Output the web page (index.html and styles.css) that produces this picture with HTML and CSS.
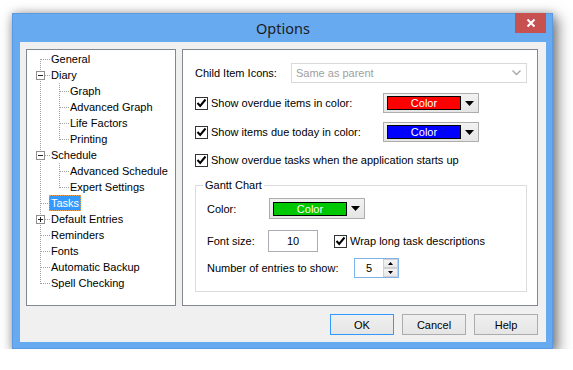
FILE: index.html
```html
<!DOCTYPE html>
<html lang="en">
<head>
    <meta charset="UTF-8">
    <title>Options</title>
    <link rel="stylesheet" href="styles.css">
</head>
<body>
    <div class="window">
        <div class="titlebar">
            <div class="title">Options</div>
            <div class="close">
                <svg width="10" height="10" viewBox="0 0 10 10"><path d="M1.5 1.5 L8.5 8.5 M8.5 1.5 L1.5 8.5" stroke="#fff" stroke-width="2"/></svg>
            </div>
        </div>
        <div class="client">
            <div class="panes">
                <div class="tree">
                    <div class="node"><span class="g1 first"></span><span class="label">General</span></div>
                    <div class="node"><span class="g1"><span class="box minus"></span></span><span class="label">Diary</span></div>
                    <div class="node"><span class="g2"></span><span class="label">Graph</span></div>
                    <div class="node"><span class="g2"></span><span class="label">Advanced Graph</span></div>
                    <div class="node"><span class="g2"></span><span class="label">Life Factors</span></div>
                    <div class="node"><span class="g2 last"></span><span class="label">Printing</span></div>
                    <div class="node"><span class="g1"><span class="box minus"></span></span><span class="label">Schedule</span></div>
                    <div class="node"><span class="g2"></span><span class="label">Advanced Schedule</span></div>
                    <div class="node"><span class="g2 last"></span><span class="label">Expert Settings</span></div>
                    <div class="node"><span class="g1"></span><span class="label selected">Tasks</span></div>
                    <div class="node"><span class="g1"><span class="box plus"></span></span><span class="label">Default Entries</span></div>
                    <div class="node"><span class="g1"></span><span class="label">Reminders</span></div>
                    <div class="node"><span class="g1"></span><span class="label">Fonts</span></div>
                    <div class="node"><span class="g1"></span><span class="label">Automatic Backup</span></div>
                    <div class="node"><span class="g1 last"></span><span class="label">Spell Checking</span></div>
                </div>

                <div class="page">
                    <div class="row combo-row">
                        <span class="combo-label">Child Item Icons:</span>
                        <div class="combo">
                            <span>Same as parent</span>
                            <svg width="9" height="6" viewBox="0 0 9 6"><path d="M0.5 0.5 L4.5 4.5 L8.5 0.5" fill="none" stroke="#a8a8a8" stroke-width="1.4"/></svg>
                        </div>
                    </div>

                    <div class="row color-row first-color">
                        <label class="check-wrap">
                            <span class="cb"><svg width="11" height="11" viewBox="0 0 11 11"><path d="M1.5 5 L4.2 8 L9.5 1.5" fill="none" stroke="#000" stroke-width="2"/></svg></span>
                            Show overdue items in color:
                        </label>
                        <div class="colorbtn">
                            <span class="swatch red">Color</span>
                            <svg class="drop" width="9" height="5" viewBox="0 0 9 5"><path d="M0 0 H9 L4.5 5 Z"/></svg>
                        </div>
                    </div>

                    <div class="row color-row second-color">
                        <label class="check-wrap">
                            <span class="cb"><svg width="11" height="11" viewBox="0 0 11 11"><path d="M1.5 5 L4.2 8 L9.5 1.5" fill="none" stroke="#000" stroke-width="2"/></svg></span>
                            Show items due today in color:
                        </label>
                        <div class="colorbtn">
                            <span class="swatch blue">Color</span>
                            <svg class="drop" width="9" height="5" viewBox="0 0 9 5"><path d="M0 0 H9 L4.5 5 Z"/></svg>
                        </div>
                    </div>

                    <div class="row startup-row">
                        <label class="check-wrap">
                            <span class="cb"><svg width="11" height="11" viewBox="0 0 11 11"><path d="M1.5 5 L4.2 8 L9.5 1.5" fill="none" stroke="#000" stroke-width="2"/></svg></span>
                            Show overdue tasks when the application starts up
                        </label>
                    </div>

                    <div class="group">
                        <span class="group-title">Gantt Chart</span>

                        <div class="row gantt-color">
                            <span class="field-label color-label">Color:</span>
                            <div class="colorbtn">
                                <span class="swatch green">Color</span>
                                <svg class="drop" width="9" height="5" viewBox="0 0 9 5"><path d="M0 0 H9 L4.5 5 Z"/></svg>
                            </div>
                        </div>

                        <div class="row font-row">
                            <span class="field-label size-label">Font size:</span>
                            <div class="textbox">10</div>
                            <label class="check-wrap wrap-check">
                                <span class="cb"><svg width="11" height="11" viewBox="0 0 11 11"><path d="M1.5 5 L4.2 8 L9.5 1.5" fill="none" stroke="#000" stroke-width="2"/></svg></span>
                                Wrap long task descriptions
                            </label>
                        </div>

                        <div class="row entries-row">
                            <span class="field-label entries-label">Number of entries to show:</span>
                            <div class="spin">
                                <span class="spin-val">5</span>
                                <div class="spin-btns">
                                    <span class="spin-btn"><svg width="5" height="3" viewBox="0 0 5 3"><path d="M0 3 H5 L2.5 0 Z"/></svg></span>
                                    <span class="spin-btn"><svg width="5" height="3" viewBox="0 0 5 3"><path d="M0 0 H5 L2.5 3 Z"/></svg></span>
                                </div>
                            </div>
                        </div>
                    </div>
                </div>
            </div>

            <div class="buttons">
                <button class="btn default">OK</button>
                <button class="btn">Cancel</button>
                <button class="btn">Help</button>
            </div>
        </div>
    </div>
</body>
</html>
```

FILE: styles.css
```css
:root {
    --v: repeating-linear-gradient(to bottom, #a0a0a0 0 1px, transparent 1px 2px);
    --h: repeating-linear-gradient(to right, #a0a0a0 0 1px, transparent 1px 2px);
}
body {
    margin: 0;
    background-color: #fff;
    font-family: "Liberation Sans", Arial, sans-serif;
    font-size: 11px;
    color: #000;
}
.window {
    width: 541px;
    height: 336px;
    box-sizing: border-box;
    margin: 13px 0 0 12px;
    border: 1px solid #5a9ae2;
    background-color: #68aaf0;
    padding: 0 6px 6px 7px;
    display: flex;
    flex-direction: column;
    box-shadow: 4px 5px 13px 1px rgba(0,0,0,0.5), 0 0 8px rgba(0,0,0,0.18);
}
.titlebar {
    height: 28px;
    display: grid;
    grid-template-columns: 1fr auto 1fr;
}
.title {
    grid-column: 2;
    font-family: "Noto Sans", "Open Sans", sans-serif;
    font-size: 14.5px;
    line-height: 28px;
    color: #1c1c1c;
}
.close {
    grid-column: 3;
    justify-self: end;
    width: 31px;
    height: 20px;
    margin-top: -1px;
    background-color: #c75050;
    display: flex;
    justify-content: center;
    align-items: center;
}
.client {
    flex: 1;
    background-color: #f0f0f0;
    padding: 7px 8px 0 6px;
    display: flex;
    flex-direction: column;
}
.panes {
    display: flex;
    gap: 6px;
    height: 257px;
}

/* tree */
.tree {
    width: 150px;
    box-sizing: border-box;
    border: 1px solid #828790;
    background-color: #fff;
    padding-top: 1px;
}
.node {
    display: flex;
    align-items: center;
    height: 16px;
}
.g1, .g2 {
    display: block;
    height: 16px;
    flex: none;
    background-repeat: no-repeat;
}
.g1 {
    width: 23px;
    background-image: var(--v), var(--h);
    background-position: 13px 0, 14px 8px;
    background-size: 1px 16px, 9px 1px;
}
.g1.first {
    background-position: 13px 8px, 14px 8px;
    background-size: 1px 8px, 9px 1px;
}
.g1.last {
    background-size: 1px 9px, 9px 1px;
}
.g2 {
    width: 42px;
    background-image: var(--v), var(--v), var(--h);
    background-position: 13px 0, 32px 0, 33px 8px;
    background-size: 1px 16px, 1px 16px, 9px 1px;
}
.g2.last {
    background-size: 1px 16px, 1px 9px, 9px 1px;
}
.box {
    display: block;
    width: 9px;
    height: 9px;
    box-sizing: border-box;
    margin: 4px 0 0 9px;
    border: 1px solid #8e8f8f;
    background-repeat: no-repeat;
    background-color: #fff;
}
.box.minus {
    background-image: linear-gradient(#222, #222);
    background-position: 1px 3px;
    background-size: 5px 1px;
}
.box.plus {
    background-image: linear-gradient(#222, #222), linear-gradient(#222, #222);
    background-position: 1px 3px, 3px 1px;
    background-size: 5px 1px, 1px 5px;
}
.label {
    padding: 0 1px;
    line-height: 14px;
    white-space: nowrap;
    border: 1px solid transparent;
    margin-left: -1px;
}
.label.selected {
    background-color: #3399ff;
    color: #fff;
    border: 1px dotted #e8a050;
}

/* page */
.page {
    flex: 1;
    border: 1px solid #828790;
    background-color: #fff;
    padding: 0 10px 0 12px;
    display: flex;
    flex-direction: column;
}
.row {
    display: flex;
    align-items: center;
    white-space: nowrap;
}
.combo-row {
    margin-top: 13px;
    height: 20px;
}
.combo-label {
    width: 96px;
}
.combo {
    width: 236px;
    height: 20px;
    box-sizing: border-box;
    border: 1px solid #d9d9d9;
    background-color: #fff;
    color: #a0a0a0;
    padding: 0 5px 0 4px;
    display: flex;
    align-items: center;
    justify-content: space-between;
}
.first-color {
    margin-top: 10px;
    height: 20px;
}
.second-color {
    margin-top: 9px;
    height: 20px;
}
.startup-row {
    margin-top: 8px;
    height: 20px;
}
.check-wrap {
    display: flex;
    align-items: center;
    gap: 3px;
}
.color-row .check-wrap {
    width: 188px;
}
.cb {
    width: 13px;
    height: 13px;
    box-sizing: border-box;
    border: 1px solid #333;
    background-color: #fff;
    display: flex;
    flex: none;
}
.colorbtn {
    width: 96px;
    height: 20px;
    box-sizing: border-box;
    border: 1px solid #adadad;
    background: linear-gradient(#f2f2f2, #e5e5e5);
    display: flex;
    align-items: center;
    padding-left: 3px;
}
.swatch {
    width: 74px;
    height: 14px;
    box-sizing: border-box;
    border: 1px solid #000;
    color: #fff;
    text-align: center;
    line-height: 12px;
}
.swatch.red { background-color: #ff0000; }
.swatch.blue { background-color: #0000ff; }
.swatch.green { background-color: #00c800; }
.drop {
    margin-left: 4px;
}

/* gantt group */
.group {
    margin-top: 15px;
    border: 1px solid #dcdcdc;
    padding: 0 0 13px 11px;
    display: flex;
    flex-direction: column;
}
.group-title {
    align-self: flex-start;
    margin: -7px 0 0 -4px;
    padding: 0 2px;
    line-height: 13px;
    background-color: #fff;
}
.gantt-color {
    margin-top: 6px;
    height: 21px;
}
.gantt-color .colorbtn {
    height: 21px;
}
.field-label {
    flex: none;
}
.color-label { width: 62px; }
.size-label { width: 61px; }
.entries-label { width: 147px; }
.font-row {
    margin-top: 11px;
    height: 22px;
}
.textbox {
    width: 50px;
    height: 22px;
    box-sizing: border-box;
    border: 1px solid #abadb3;
    text-align: center;
    line-height: 20px;
}
.wrap-check {
    margin-left: 16px;
}
.entries-row {
    margin-top: 6px;
    height: 20px;
}
.spin {
    width: 45px;
    height: 20px;
    box-sizing: border-box;
    border: 1px solid #7eb4ea;
    display: flex;
}
.spin-val {
    flex: 1;
    text-align: center;
    line-height: 18px;
}
.spin-btns {
    width: 15px;
    display: flex;
    flex-direction: column;
    gap: 0;
}
.spin-btn {
    flex: 1;
    box-sizing: border-box;
    border: 1px solid #d0d0d0;
    background: linear-gradient(#f4f4f4, #e8e8e8);
    display: flex;
    justify-content: center;
    align-items: center;
}

/* bottom buttons */
.buttons {
    display: flex;
    justify-content: flex-end;
    gap: 8px;
    margin-top: 8px;
}
.btn {
    width: 64px;
    height: 21px;
    box-sizing: border-box;
    border: 1px solid #acacac;
    background: linear-gradient(#f0f0f0, #e5e5e5);
    font-family: "Liberation Sans", Arial, sans-serif;
    font-size: 11px;
    color: #000;
    padding: 0;
}
.btn.default {
    border-color: #3399ff;
}
```
